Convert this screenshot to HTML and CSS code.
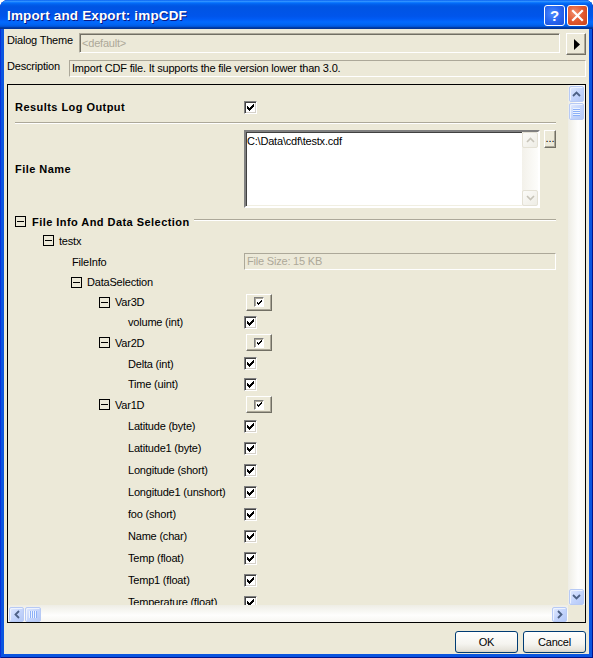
FILE: index.html
```html
<!DOCTYPE html>
<html>
<head>
<meta charset="utf-8">
<link rel="stylesheet" href="styles.css">
</head>
<body>
<div class="window">
  <div class="titlebar">
    <span class="title">Import and Export: impCDF</span>
    <div class="tbtns">
      <div class="tb help">?</div>
      <div class="tb close"><svg width="19" height="19" viewBox="0 0 19 19"><path d="M5 5L14 14M14 5L5 14" stroke="#fff" stroke-width="2.2" stroke-linecap="square"/></svg></div>
    </div>
  </div>
  <div class="client">
    <div class="theme-row">
      <span class="lbl lbl-theme">Dialog Theme</span>
      <div class="theme-box">&lt;default&gt;</div>
      <div class="arrow-btn"><svg width="6" height="11" viewBox="0 0 6 11"><path d="M0 0L6 5.5L0 11Z" fill="#000"/></svg></div>
    </div>
    <div class="desc-row">
      <span class="lbl lbl-desc">Description</span>
      <div class="desc-box">Import CDF file. It supports the file version lower than 3.0.</div>
    </div>
    <div class="panel">
      <div class="content">
        <div class="prow results">
          <div class="plabel bold">Results Log Output</div>
          <span class="cb"><svg width="7" height="7" viewBox="0 0 7 7" shape-rendering="crispEdges"><path d="M0 2h1v3h-1zM1 3h1v3h-1zM2 4h1v3h-1zM3 3h1v3h-1zM4 2h1v3h-1zM5 1h1v3h-1zM6 0h1v3h-1z"/></svg></span>
        </div>
        <div class="sep"></div>
        <div class="prow filename">
          <div class="plabel bold">File Name</div>
          <div class="tbox">
            <div class="ttxt">C:\Data\cdf\testx.cdf</div>
            <div class="tsb">
              <div class="dsa"><svg width="9" height="6" viewBox="0 0 9 6"><path d="M1 5L4.5 1.5L8 5" fill="none" stroke="#C6C3B8" stroke-width="1.6"/></svg></div>
              <div class="dsa"><svg width="9" height="6" viewBox="0 0 9 6"><path d="M1 1L4.5 4.5L8 1" fill="none" stroke="#C6C3B8" stroke-width="1.6"/></svg></div>
            </div>
          </div>
          <div class="dots">...</div>
        </div>
        <div class="grp">
          <span class="exp"></span>
          <span class="grptext bold">File Info And Data Selection</span>
          <span class="grpline"></span>
        </div>

        <div class="tr h21"><div class="tlabel i28"><span class="exp"></span><span class="tt">testx</span></div></div>
        <div class="tr h21"><div class="tlabel i57">FileInfo</div><div class="field">File Size: 15 KB</div></div>
        <div class="tr h20"><div class="tlabel i56"><span class="exp"></span><span class="tt">DataSelection</span></div></div>
        <div class="tr h20"><div class="tlabel i84"><span class="exp"></span><span class="tt">Var3D</span></div><span class="vbtn"><span class="scb"><svg width="5" height="5" viewBox="0 0 5 5" shape-rendering="crispEdges"><path d="M0 2h1v2h-1zM1 3h1v2h-1zM2 2h1v2h-1zM3 1h1v2h-1zM4 0h1v2h-1z"/></svg></span></span></div>
        <div class="tr h20"><div class="tlabel i113">volume (int)</div><span class="cb"><svg width="7" height="7" viewBox="0 0 7 7" shape-rendering="crispEdges"><path d="M0 2h1v3h-1zM1 3h1v3h-1zM2 4h1v3h-1zM3 3h1v3h-1zM4 2h1v3h-1zM5 1h1v3h-1zM6 0h1v3h-1z"/></svg></span></div>
        <div class="tr h21"><div class="tlabel i84"><span class="exp"></span><span class="tt">Var2D</span></div><span class="vbtn"><span class="scb"><svg width="5" height="5" viewBox="0 0 5 5" shape-rendering="crispEdges"><path d="M0 2h1v2h-1zM1 3h1v2h-1zM2 2h1v2h-1zM3 1h1v2h-1zM4 0h1v2h-1z"/></svg></span></span></div>
        <div class="tr h21"><div class="tlabel i113">Delta (int)</div><span class="cb"><svg width="7" height="7" viewBox="0 0 7 7" shape-rendering="crispEdges"><path d="M0 2h1v3h-1zM1 3h1v3h-1zM2 4h1v3h-1zM3 3h1v3h-1zM4 2h1v3h-1zM5 1h1v3h-1zM6 0h1v3h-1z"/></svg></span></div>
        <div class="tr h20"><div class="tlabel i113">Time (uint)</div><span class="cb"><svg width="7" height="7" viewBox="0 0 7 7" shape-rendering="crispEdges"><path d="M0 2h1v3h-1zM1 3h1v3h-1zM2 4h1v3h-1zM3 3h1v3h-1zM4 2h1v3h-1zM5 1h1v3h-1zM6 0h1v3h-1z"/></svg></span></div>
        <div class="tr h21"><div class="tlabel i84"><span class="exp"></span><span class="tt">Var1D</span></div><span class="vbtn"><span class="scb"><svg width="5" height="5" viewBox="0 0 5 5" shape-rendering="crispEdges"><path d="M0 2h1v2h-1zM1 3h1v2h-1zM2 2h1v2h-1zM3 1h1v2h-1zM4 0h1v2h-1z"/></svg></span></span></div>
        <div class="tr h22"><div class="tlabel i113">Latitude (byte)</div><span class="cb"><svg width="7" height="7" viewBox="0 0 7 7" shape-rendering="crispEdges"><path d="M0 2h1v3h-1zM1 3h1v3h-1zM2 4h1v3h-1zM3 3h1v3h-1zM4 2h1v3h-1zM5 1h1v3h-1zM6 0h1v3h-1z"/></svg></span></div>
        <div class="tr h22"><div class="tlabel i113">Latitude1 (byte)</div><span class="cb"><svg width="7" height="7" viewBox="0 0 7 7" shape-rendering="crispEdges"><path d="M0 2h1v3h-1zM1 3h1v3h-1zM2 4h1v3h-1zM3 3h1v3h-1zM4 2h1v3h-1zM5 1h1v3h-1zM6 0h1v3h-1z"/></svg></span></div>
        <div class="tr h22"><div class="tlabel i113">Longitude (short)</div><span class="cb"><svg width="7" height="7" viewBox="0 0 7 7" shape-rendering="crispEdges"><path d="M0 2h1v3h-1zM1 3h1v3h-1zM2 4h1v3h-1zM3 3h1v3h-1zM4 2h1v3h-1zM5 1h1v3h-1zM6 0h1v3h-1z"/></svg></span></div>
        <div class="tr h22"><div class="tlabel i113">Longitude1 (unshort)</div><span class="cb"><svg width="7" height="7" viewBox="0 0 7 7" shape-rendering="crispEdges"><path d="M0 2h1v3h-1zM1 3h1v3h-1zM2 4h1v3h-1zM3 3h1v3h-1zM4 2h1v3h-1zM5 1h1v3h-1zM6 0h1v3h-1z"/></svg></span></div>
        <div class="tr h22"><div class="tlabel i113">foo (short)</div><span class="cb"><svg width="7" height="7" viewBox="0 0 7 7" shape-rendering="crispEdges"><path d="M0 2h1v3h-1zM1 3h1v3h-1zM2 4h1v3h-1zM3 3h1v3h-1zM4 2h1v3h-1zM5 1h1v3h-1zM6 0h1v3h-1z"/></svg></span></div>
        <div class="tr h22"><div class="tlabel i113">Name (char)</div><span class="cb"><svg width="7" height="7" viewBox="0 0 7 7" shape-rendering="crispEdges"><path d="M0 2h1v3h-1zM1 3h1v3h-1zM2 4h1v3h-1zM3 3h1v3h-1zM4 2h1v3h-1zM5 1h1v3h-1zM6 0h1v3h-1z"/></svg></span></div>
        <div class="tr h22"><div class="tlabel i113">Temp (float)</div><span class="cb"><svg width="7" height="7" viewBox="0 0 7 7" shape-rendering="crispEdges"><path d="M0 2h1v3h-1zM1 3h1v3h-1zM2 4h1v3h-1zM3 3h1v3h-1zM4 2h1v3h-1zM5 1h1v3h-1zM6 0h1v3h-1z"/></svg></span></div>
        <div class="tr h22"><div class="tlabel i113">Temp1 (float)</div><span class="cb"><svg width="7" height="7" viewBox="0 0 7 7" shape-rendering="crispEdges"><path d="M0 2h1v3h-1zM1 3h1v3h-1zM2 4h1v3h-1zM3 3h1v3h-1zM4 2h1v3h-1zM5 1h1v3h-1zM6 0h1v3h-1z"/></svg></span></div>
        <div class="tr h22"><div class="tlabel i113">Temperature (float)</div><span class="cb"><svg width="7" height="7" viewBox="0 0 7 7" shape-rendering="crispEdges"><path d="M0 2h1v3h-1zM1 3h1v3h-1zM2 4h1v3h-1zM3 3h1v3h-1zM4 2h1v3h-1zM5 1h1v3h-1zM6 0h1v3h-1z"/></svg></span></div>
      </div>
      <div class="vsb">
        <div class="sa sav"><svg width="9" height="6" viewBox="0 0 9 6"><path d="M1 5L4.5 1.5L8 5" fill="none" stroke="#4D6185" stroke-width="1.8"/></svg></div>
        <div class="thumb thumbv"><span class="gripv"></span></div>
        <div class="sa sav down"><svg width="9" height="6" viewBox="0 0 9 6"><path d="M1 1L4.5 4.5L8 1" fill="none" stroke="#4D6185" stroke-width="1.8"/></svg></div>
      </div>
      <div class="hsb">
        <div class="sa sah"><svg width="6" height="9" viewBox="0 0 6 9"><path d="M5 1L1.5 4.5L5 8" fill="none" stroke="#4D6185" stroke-width="1.8"/></svg></div>
        <div class="thumb thumbh"><span class="griph"></span></div>
        <div class="sa sah right"><svg width="6" height="9" viewBox="0 0 6 9"><path d="M1 1L4.5 4.5L1 8" fill="none" stroke="#4D6185" stroke-width="1.8"/></svg></div>
      </div>
      <div class="corner"></div>
    </div>
    <div class="footer">
      <div class="btn">OK</div>
      <div class="btn">Cancel</div>
    </div>
  </div>
</div>
</body>
</html>
```
FILE: styles.css
```css
* { box-sizing: border-box; }
html, body { margin: 0; padding: 0; }
body {
  width: 593px; height: 658px; overflow: hidden; background: #fff;
  font-family: "Liberation Sans", Arial, sans-serif; font-size: 11px; color: #000;
  letter-spacing: -0.2px;
}
.window {
  width: 593px; height: 658px; background: #0A55E0;
  border-radius: 8px 8px 0 0; overflow: hidden;
  display: flex; flex-direction: column;
  box-shadow: inset 1px 0 #0831D9, inset -1px 0 #00138C, inset 0 -1px #00138C;
}
.titlebar {
  height: 29px; flex: none; display: flex; align-items: center;
  padding: 1px 5px 0 7px;
  background: linear-gradient(to bottom, #0058EE 0%, #3593FF 4%, #288EFF 6%, #127DFF 8%, #036FFC 10%, #0262EE 14%, #0057E5 20%, #0054E3 24%, #0055EB 56%, #005BF5 66%, #026AFE 76%, #0062EF 86%, #0052D6 92%, #0040AB 94%, #003092 100%);
}
.title {
  flex: 1; color: #fff; font-weight: bold; font-size: 13.5px; letter-spacing: 0.15px;
  text-shadow: 1px 1px #0A1883; white-space: nowrap;
}
.tbtns { display: flex; gap: 2px; }
.tb {
  width: 21px; height: 21px; border: 1px solid #fff; border-radius: 3px;
  display: flex; align-items: center; justify-content: center;
}
.help {
  background: radial-gradient(circle at 40% 40%, #4C8BFF 0%, #2663EE 55%, #1B4FD6 100%);
  color: #fff; font-weight: bold; font-size: 15px; line-height: 1; letter-spacing: 0;
}
.close {
  background: radial-gradient(circle at 35% 35%, #F2906F 0%, #E2582E 50%, #C8431C 100%);
}
.client {
  flex: 1; margin: 0 4px 4px; background: #ECE9D8;
  padding: 4px 3px 0; display: flex; flex-direction: column;
}
.theme-row { display: flex; height: 22px; flex: none; }
.lbl { flex: none; padding-top: 1px; white-space: nowrap; }
.lbl-theme { width: 72px; }
.lbl-desc { width: 62px; padding-top: 0; }
.theme-box {
  width: 481px; height: 20px; border: 1px solid;
  border-color: #ACA899 #fff #fff #ACA899;
  box-shadow: inset 1px 1px #716F64;
  color: #ACA899; padding: 3px 0 0 2px;
}
.arrow-btn {
  margin-left: 6px; width: 20px; height: 22px; border: 1px solid;
  border-color: #fff #716F64 #716F64 #fff;
  box-shadow: inset -1px -1px #ACA899;
  display: flex; align-items: center; justify-content: center; padding-left: 2px;
}
.desc-row { display: flex; height: 17px; margin-top: 5px; flex: none; }
.desc-box {
  flex: 1; border: 1px solid; border-color: #ACA899 #fff #fff #ACA899;
  padding: 1px 0 0 2px; white-space: nowrap;
}
.panel {
  margin-top: 7px; height: 539px; flex: none; border: 1px solid #000;
  display: grid; grid-template-columns: 1fr 17px; grid-template-rows: 1fr 17px;
  background: #ECE9D8;
}
.content { overflow: hidden; padding: 0 12px 0 7px; }
.prow { display: flex; align-items: center; }
.plabel { width: 229px; flex: none; white-space: nowrap; }
.bold { font-weight: bold; letter-spacing: 0.45px; }
.results { margin-top: 13px; height: 18px; }
.sep { height: 2px; border-top: 1px solid #ACA899; border-bottom: 1px solid #fff; margin-top: 6px; }
.filename { margin-top: 6px; height: 78px; align-items: center; }
.tbox {
  width: 296px; height: 78px; flex: none; display: flex; background: #fff;
  border: 2px solid; border-color: #808080 #fff #fff #808080;
  box-shadow: inset 1px 1px #404040, inset -1px -1px #F1EFE2;
}
.ttxt { flex: 1; padding: 3px 0 0 1px; }
.tsb {
  width: 16px; display: flex; flex-direction: column; justify-content: space-between;
  background: linear-gradient(to right, #F3F1EA, #FDFDFB);
}
.dsa {
  height: 16px; border: 1px solid #E4E1D5; border-radius: 2px;
  background: linear-gradient(to bottom right, #FBFBF8, #EEEDE5);
  display: flex; align-items: center; justify-content: center;
}
.dots {
  align-self: flex-start; margin-left: 4px; width: 18px; height: 18px;
  border: 1px solid; border-color: #fff #716F64 #716F64 #fff;
  box-shadow: inset -1px -1px #ACA899; letter-spacing: 0;
  text-align: center; line-height: 14px; font-size: 11px;
}
.grp { margin-top: 5px; height: 17px; display: flex; align-items: center; }
.exp {
  width: 11px; height: 11px; flex: none; border: 1px solid #000;
  display: flex; align-items: center; justify-content: center;
}
.exp::after { content: ""; width: 7px; height: 1px; background: #000; }
.grptext { margin-left: 6px; white-space: nowrap; }
.grpline {
  flex: 1; height: 2px; border-top: 1px solid #ACA899; border-bottom: 1px solid #fff;
  margin-left: 4px; margin-bottom: 3px;
}
.tr { display: flex; align-items: center; }
.h20 { height: 20px; }
.h21 { height: 21px; }
.h22 { height: 22px; }
.tlabel { width: 229px; flex: none; display: flex; align-items: center; white-space: nowrap; }
.tt { margin-left: 5px; }
.i28 { padding-left: 28px; }
.i56 { padding-left: 56px; }
.i57 { padding-left: 57px; }
.i84 { padding-left: 84px; }
.i113 { padding-left: 113px; }
.cb {
  width: 13px; height: 13px; flex: none; background: #fff;
  border: 1px solid; border-color: #808080 #fff #fff #808080;
  box-shadow: inset 1px 1px #404040, inset -1px -1px #D4D0C8;
  display: flex; align-items: center; justify-content: center;
}
.cb svg { fill: #000; }
.vbtn {
  margin-left: 2px; width: 26px; height: 17px; flex: none;
  border: 1px solid; border-color: #fff #716F64 #716F64 #fff;
  box-shadow: inset -1px -1px #ACA899;
  display: flex; align-items: center; justify-content: center;
}
.scb {
  width: 10px; height: 10px; background: #fff;
  border: 1px solid; border-color: #808080 #fff #fff #808080;
  box-shadow: inset 1px 1px #ACA899;
  display: flex; align-items: center; justify-content: center;
}
.scb svg { fill: #000; }
.field {
  width: 312px; height: 17px; flex: none; border: 1px solid;
  border-color: #ACA899 #fff #fff #ACA899; color: #ACA899;
  padding: 1px 0 0 2px; white-space: nowrap;
}
.vsb {
  display: flex; flex-direction: column; padding: 1px 1px 0 1px;
  background: linear-gradient(to right, #EEEDE5, #FEFEFD 60%, #F7F6F2);
}
.hsb {
  display: flex; padding: 2px 0 0 1px;
  background: linear-gradient(to bottom, #EEEDE5, #FEFEFD 60%, #F7F6F2);
}
.corner { background: #ECE9D8; }
.sa, .thumb {
  border: 1px solid #B7CAF5; border-radius: 2px;
  background: linear-gradient(to bottom right, #E1EAFE, #C3D4FC 55%, #B4C8F6);
  display: flex; align-items: center; justify-content: center;
  box-shadow: inset 1px 1px #EEF3FE;
}
.sav { height: 16px; }
.sav.down { margin-top: auto; margin-bottom: 0; }
.thumbv { height: 17px; margin-top: 1px; }
.sah { width: 15px; }
.sah.right { margin-left: auto; margin-right: 1px; }
.thumbh { width: 16px; margin-left: 1px; }
.gripv {
  width: 7px; height: 8px;
  background: repeating-linear-gradient(to bottom, #EEF4FE 0 1px, #8CB0F8 1px 2px);
}
.griph {
  width: 8px; height: 7px;
  background: repeating-linear-gradient(to right, #EEF4FE 0 1px, #8CB0F8 1px 2px);
}
.footer { margin-top: 8px; display: flex; justify-content: flex-end; gap: 5px; }
.btn {
  width: 63px; height: 22px; border: 1px solid #003C74; border-radius: 3px;
  background: linear-gradient(to bottom, #FFFFFF 0%, #F5F4EF 60%, #E6E3DA 90%, #D6D0C5 100%);
  display: flex; align-items: center; justify-content: center;
}
```
